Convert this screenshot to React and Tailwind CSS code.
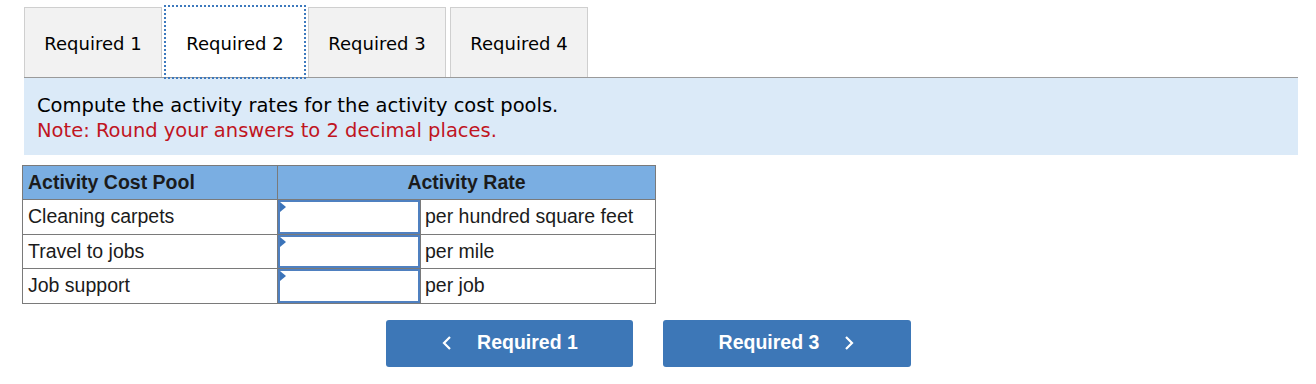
import React from "react";

const tabs = ["Required 1", "Required 2", "Required 3", "Required 4"];

const rows = [
    { pool: "Cleaning carpets", unit: "per hundred square feet" },
    { pool: "Travel to jobs", unit: "per mile" },
    { pool: "Job support", unit: "per job" },
];

const RateInput = () => (
    <div className="relative h-[33.5px] w-full border-2 border-[#4f80c0] bg-white">
        <span className="absolute left-0 top-0 h-0 w-0 border-y-[5px] border-l-[6px] border-y-transparent border-l-[#3b73b9]" />
        <input type="text" className="h-full w-full bg-transparent px-1 outline-none" />
    </div>
);

export default function App() {
    return (
        <div className="min-h-[384px] bg-white pt-[7px]">
            {/* tabs */}
            <div className="ml-[24px] flex gap-[4px] font-['DejaVu_Sans',Verdana,sans-serif] text-[18px] text-black">
                {tabs.map((tab, i) => (
                    <button
                        key={tab}
                        className={
                            i === 1
                                ? "flex h-[70px] w-[138px] items-center justify-center pt-[2px] bg-white outline-2 outline-dotted outline-[#3d79bd]"
                                : "flex h-[70px] w-[138px] items-center justify-center pt-[2px] border border-b-0 border-[#cfcfcf] bg-[#f2f2f2]"
                        }
                    >
                        {tab}
                    </button>
                ))}
            </div>

            {/* instructions */}
            <div className="ml-[24px] mr-[18px] h-[78px] border-t border-[#9a9a9a] bg-[#dbeaf8] pl-[13px] pt-[15px] font-['DejaVu_Sans',Verdana,sans-serif] text-[19.5px] leading-[25px]">
                <p className="text-black">Compute the activity rates for the activity cost pools.</p>
                <p className="text-[#c0151f]">Note: Round your answers to 2 decimal places.</p>
            </div>

            {/* rates table */}
            <table className="ml-[22px] mt-[10px] w-[634px] border-collapse font-['Liberation_Sans',Arial,sans-serif] text-[19.5px] text-[#1b1b1b]">
                <thead>
                    <tr className="h-[34px] bg-[#7aaee2]">
                        <th className="w-[255px] border border-[#7a7a7a] px-[5px] text-left font-bold">Activity Cost Pool</th>
                        <th colSpan={2} className="border border-[#7a7a7a] text-center font-bold">Activity Rate</th>
                    </tr>
                </thead>
                <tbody>
                    {rows.map((row) => (
                        <tr key={row.pool}>
                            <td className="border border-[#7a7a7a] px-[5px]">{row.pool}</td>
                            <td className="w-[143px] border border-[#7a7a7a] p-0">
                                <RateInput />
                            </td>
                            <td className="border border-[#7a7a7a] px-[4px]">{row.unit}</td>
                        </tr>
                    ))}
                </tbody>
            </table>

            {/* nav buttons */}
            <div className="ml-[386px] mt-[16px] flex gap-[30px] font-['Liberation_Sans',Arial,sans-serif] text-[19.5px] font-bold text-white">
                <button className="flex h-[47px] w-[247px] items-center justify-center gap-[24px] rounded-[3px] bg-[#3d77b7]">
                    <svg width="12" height="16" viewBox="0 0 12 16" fill="none" stroke="white" strokeWidth="2.2">
                        <path d="M9 2 L3 8 L9 14" />
                    </svg>
                    <span>Required 1</span>
                </button>
                <button className="flex h-[47px] w-[248px] items-center justify-center gap-[24px] rounded-[3px] bg-[#3d77b7]">
                    <span>Required 3</span>
                    <svg width="12" height="16" viewBox="0 0 12 16" fill="none" stroke="white" strokeWidth="2.2">
                        <path d="M3 2 L9 8 L3 14" />
                    </svg>
                </button>
            </div>
        </div>
    );
}
